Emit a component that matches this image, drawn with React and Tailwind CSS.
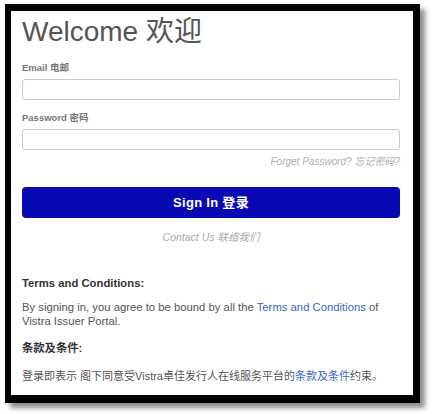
export default function App() {
  return (
    <div
      className="min-h-screen w-[433px] bg-white pt-[4px] pl-[5px]"
      style={{ fontFamily: '"Liberation Sans", Arial, "Noto Sans CJK SC", sans-serif' }}
    >
      {/* framed card */}
      <div className="w-[415px] h-[399px] border-[7px] border-l-[6px] border-b-[8px] border-black bg-white shadow-[5px_5px_5px_rgba(0,0,0,0.45)] pl-[11px] pr-[13px] pt-[5px]">
        <h1 className="text-[28px] leading-[32px] text-[#555555] font-normal">Welcome 欢迎</h1>

        <form className="mt-[13px]">
          <label className="block text-[9.5px] leading-[14px] font-bold text-[#777777]">Email 电邮</label>
          <input
            type="text"
            className="mt-[4px] block w-[378px] h-[21px] rounded-[3px] border border-[#cccccc] bg-white"
          />

          <label className="mt-[11px] block text-[9.5px] leading-[14px] font-bold text-[#777777]">Password 密码</label>
          <input
            type="password"
            className="mt-[4px] block w-[378px] h-[21px] rounded-[3px] border border-[#cccccc] bg-white"
          />

          <div className="w-[378px] mt-[5px] text-right text-[10px] leading-[14px] italic text-[#b0b0b0]">
            Forget Password? 忘记密码?
          </div>

          <button
            type="button"
            className="mt-[18px] block w-[378px] h-[31px] rounded-[4px] bg-[#0a0ab4] text-white text-[13px] font-bold tracking-[0.3px]"
          >
            Sign In 登录
          </button>

          <div className="w-[378px] mt-[12px] text-center text-[10.5px] leading-[14px] italic text-[#aaaaaa]">
            Contact Us 联络我们
          </div>
        </form>

        <div className="mt-[32px] text-[11.3px] text-[#555555]">
          <p className="font-bold text-[#333333] leading-[14px]">Terms and Conditions:</p>
          <p className="mt-[10px] leading-[14px] w-[370px]">
            By signing in, you agree to be bound by all the{' '}
            <span className="text-[#3a66c8]">Terms and Conditions</span> of Vistra Issuer Portal.
          </p>
          <p className="mt-[13px] font-bold text-[#333333] leading-[14px]">条款及条件:</p>
          <p className="mt-[14px] leading-[14px] text-[11px] whitespace-nowrap">
            登录即表示 阁下同意受Vistra卓佳发行人在线服务平台的
            <span className="text-[#3a66c8]">条款及条件</span>约束。
          </p>
        </div>
      </div>
    </div>
  );
}
